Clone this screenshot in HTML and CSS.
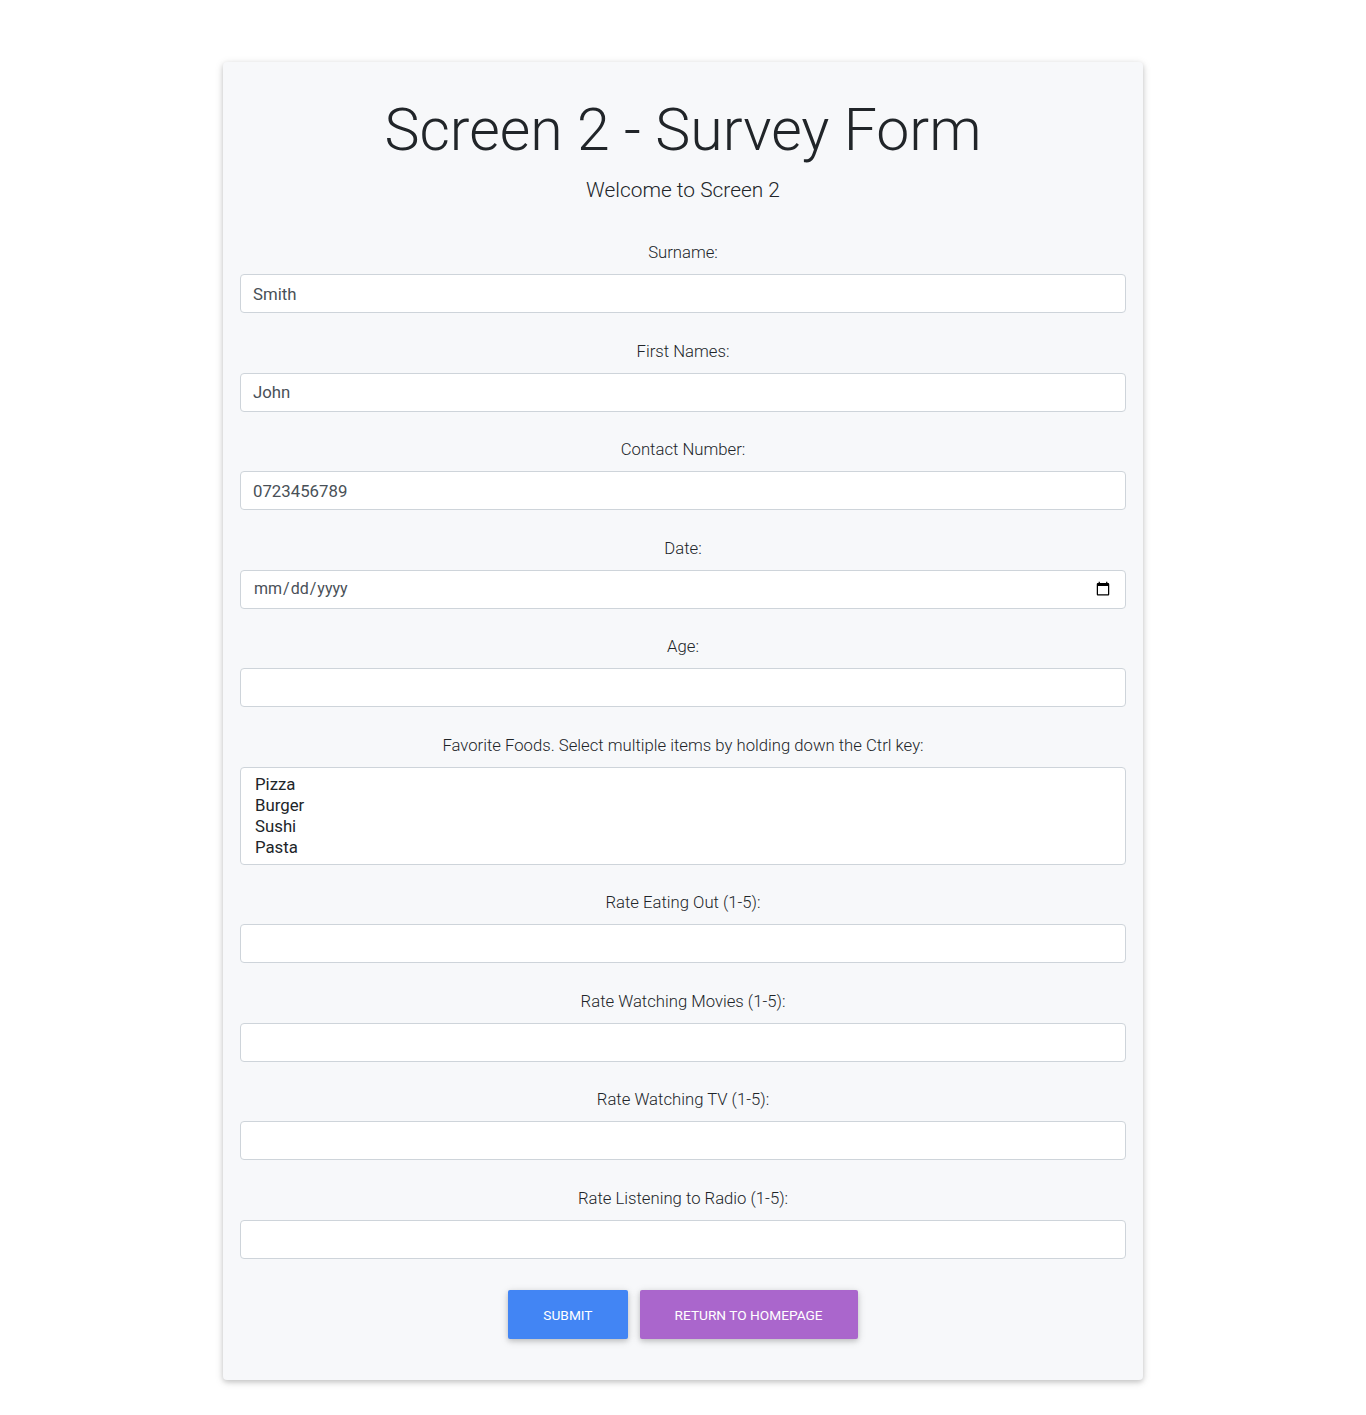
FILE: index.html
```html
<!DOCTYPE html>
<html lang="en">
<head>
<meta charset="utf-8">
<title>Screen 2 - Survey Form</title>
<link rel="stylesheet" href="styles.css">
</head>
<body>
<main class="page">
  <section class="card">
    <h1 class="title">Screen 2 - Survey Form</h1>
    <p class="lead">Welcome to Screen 2</p>
    <form class="form">
      <div class="group">
        <label class="label" for="surname">Surname:</label>
        <input class="control" id="surname" type="text" value="Smith">
      </div>
      <div class="group">
        <label class="label" for="first">First Names:</label>
        <input class="control" id="first" type="text" value="John">
      </div>
      <div class="group">
        <label class="label" for="contact">Contact Number:</label>
        <input class="control" id="contact" type="tel" value="0723456789">
      </div>
      <div class="group">
        <label class="label" for="date">Date:</label>
        <input class="control date" id="date" type="date">
      </div>
      <div class="group">
        <label class="label" for="age">Age:</label>
        <input class="control" id="age" type="number">
      </div>
      <div class="group">
        <label class="label" for="foods">Favorite Foods. Select multiple items by holding down the Ctrl key:</label>
        <select class="control list" id="foods" multiple>
          <option>Pizza</option>
          <option>Burger</option>
          <option>Sushi</option>
          <option>Pasta</option>
        </select>
      </div>
      <div class="group">
        <label class="label" for="r1">Rate Eating Out (1-5):</label>
        <input class="control" id="r1" type="number">
      </div>
      <div class="group">
        <label class="label" for="r2">Rate Watching Movies (1-5):</label>
        <input class="control" id="r2" type="number">
      </div>
      <div class="group">
        <label class="label" for="r3">Rate Watching TV (1-5):</label>
        <input class="control" id="r3" type="number">
      </div>
      <div class="group">
        <label class="label" for="r4">Rate Listening to Radio (1-5):</label>
        <input class="control" id="r4" type="number">
      </div>
      <div class="actions">
        <button type="submit" class="btn btn-primary">Submit</button>
        <button type="button" class="btn btn-secondary">Return to Homepage</button>
      </div>
    </form>
  </section>
</main>
</body>
</html>
```

FILE: styles.css
```css
* { box-sizing: border-box; }
html, body { margin: 0; padding: 0; background: #fff; }
body {
  font-family: Roboto, "Liberation Sans", Arial, sans-serif;
  color: #212529;
  font-size: 16px;
  line-height: 1.5;
}
.page {
  display: flex;
  justify-content: center;
  padding-top: 62px;
  padding-bottom: 35px;
}
.card {
  width: 920px;
  background: #f7f8fa;
  border-radius: 4px;
  box-shadow: 0 2px 5px 0 rgba(0,0,0,.16), 0 2px 10px 0 rgba(0,0,0,.12);
  padding: 32px 17px 41px;
}
.title {
  margin: 0 0 9px;
  text-align: center;
  font-weight: 300;
  font-size: 59px;
  line-height: 72px;
  color: #212529;
}
.lead {
  margin: 0 0 36px;
  text-align: center;
  font-size: 20.9px;
  font-weight: 300;
  line-height: 30px;
}
.form { display: flex; flex-direction: column; }
.group {
  display: flex;
  flex-direction: column;
  margin-bottom: 26.5px;
}
.label {
  text-align: center;
  font-weight: 300;
  font-size: 16.7px;
  line-height: 24px;
  margin-bottom: 9px;
  color: #212529;
}
.control {
  display: block;
  width: 100%;
  height: 39px;
  padding: 6px 12px;
  font-family: Roboto, "Liberation Sans", Arial, sans-serif;
  font-size: 16.8px;
  font-weight: 400;
  line-height: 1.5;
  color: #495057;
  background: #fff;
  border: 1px solid #ced4da;
  border-radius: 4px;
  outline: none;
  margin: 0;
}
.date { font-size: 16px; }
.list {
  height: 98px;
  padding: 6px 12px;
  color: #212529;
  overflow: hidden;
}
.list option {
  padding: 0 2px;
  height: 21px;
  line-height: 21px;
  color: #212529;
}
.actions {
  display: flex;
  justify-content: center;
  gap: 12px;
  padding-top: 5px;
}
.btn {
  font-family: Roboto, "Liberation Sans", Arial, sans-serif;
  font-size: 13.7px;
  font-weight: 400;
  line-height: 20px;
  text-transform: uppercase;
  color: #fff;
  border: 1px solid transparent;
  border-radius: 2px;
  padding: 13.5px 34px;
  box-shadow: 0 2px 5px 0 rgba(0,0,0,.16), 0 2px 10px 0 rgba(0,0,0,.12);
  cursor: pointer;
}
.btn-primary { background: #4285f4; }
.btn-secondary { background: #aa66cc; }
```
